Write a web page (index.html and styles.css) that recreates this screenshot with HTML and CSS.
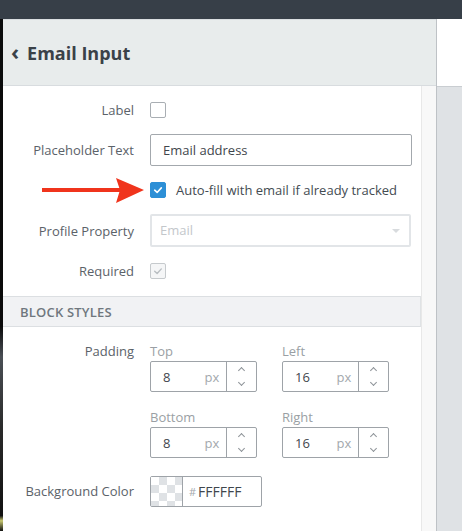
FILE: index.html
```html
<!DOCTYPE html>
<html lang="en">
<head>
    <meta charset="UTF-8">
    <meta name="viewport" content="width=device-width, initial-scale=1.0">
    <title>Email Input</title>
    <link rel="stylesheet" href="styles.css">
</head>
<body>
    <div class="topbar"></div>
    <div class="main">
        <div class="edge"></div>
        <div class="panel">
            <div class="panel-head">
                <span class="back">&#8249;</span>
                <h1>Email Input</h1>
            </div>
            <div class="panel-body">
                <div class="content">
                    <div class="fields">
                        <div class="row">
                            <label class="row-label">Label</label>
                            <span class="check"></span>
                        </div>
                        <div class="row">
                            <label class="row-label">Placeholder Text</label>
                            <div class="text-input">Email address</div>
                        </div>
                        <div class="row">
                            <span class="row-label"></span>
                            <span class="check checked">
                                <svg viewBox="0 0 16 16" width="16" height="16"><path d="M4.2 8.2 L7 10.8 L11.8 5.6" fill="none" stroke="#fff" stroke-width="1.8" stroke-linecap="round" stroke-linejoin="round"/></svg>
                            </span>
                            <span class="check-text">Auto-fill with email if already tracked</span>
                        </div>
                        <div class="row row-gap">
                            <label class="row-label">Profile Property</label>
                            <div class="select disabled">Email<span class="caret"></span></div>
                        </div>
                        <div class="row">
                            <label class="row-label">Required</label>
                            <span class="check disabled">
                                <svg viewBox="0 0 16 16" width="16" height="16"><path d="M4.2 8.2 L7 10.8 L11.8 5.6" fill="none" stroke="#b9bec2" stroke-width="1.6" stroke-linecap="round" stroke-linejoin="round"/></svg>
                            </span>
                        </div>
                    </div>

                    <div class="section-title">BLOCK STYLES</div>

                    <div class="fields block">
                        <div class="row row-top">
                            <label class="row-label">Padding</label>
                            <div class="pad-grid">
                                <div class="pad">
                                    <div class="pad-label">Top</div>
                                    <div class="num">
                                        <span class="num-val">8</span><span class="unit">px</span>
                                        <span class="spin"><i class="up"></i><i class="down"></i></span>
                                    </div>
                                </div>
                                <div class="pad">
                                    <div class="pad-label">Left</div>
                                    <div class="num">
                                        <span class="num-val">16</span><span class="unit">px</span>
                                        <span class="spin"><i class="up"></i><i class="down"></i></span>
                                    </div>
                                </div>
                                <div class="pad">
                                    <div class="pad-label">Bottom</div>
                                    <div class="num">
                                        <span class="num-val">8</span><span class="unit">px</span>
                                        <span class="spin"><i class="up"></i><i class="down"></i></span>
                                    </div>
                                </div>
                                <div class="pad">
                                    <div class="pad-label">Right</div>
                                    <div class="num">
                                        <span class="num-val">16</span><span class="unit">px</span>
                                        <span class="spin"><i class="up"></i><i class="down"></i></span>
                                    </div>
                                </div>
                            </div>
                        </div>
                        <div class="row bg-row">
                            <label class="row-label">Background Color</label>
                            <div class="color">
                                <span class="swatch"></span>
                                <span class="hash">#</span><span class="hex">FFFFFF</span>
                            </div>
                        </div>
                    </div>
                </div>
                <div class="track"></div>
            </div>
        </div>
        <div class="side">
            <div class="side-top"></div>
            <div class="side-rest"></div>
        </div>
    </div>

    <svg class="arrow" width="110" height="30" viewBox="0 0 110 30">
        <rect x="2" y="11" width="80" height="4" fill="#f0341c"/>
        <polygon points="76,1 104,13 76,26 80,13" fill="#f0341c"/>
    </svg>
</body>
</html>
```

FILE: styles.css
```css
body {
    font-family: 'Open Sans', 'Liberation Sans', sans-serif;
    font-size: 13px;
    margin: 0;
    padding: 0;
    width: 462px;
    height: 531px;
    overflow: hidden;
    position: relative;
    background-color: #fff;
    color: #444b52;
}
.topbar {
    height: 19px;
    background-color: #373f48;
}
.main {
    display: flex;
    height: 512px;
}
.edge {
    width: 3px;
    background: linear-gradient(#0b0b0b 0%, #0b0b0b 60%, #4a4f55 66%, #2a2a2a 80%, #111 97%, #c8c870 98%, #111 100%);
}
.panel {
    width: 433px;
    border-right: 1px solid #bec2c6;
    display: flex;
    flex-direction: column;
}
.panel-head {
    height: 65px;
    border-top: 1px solid #dadee1;
    border-bottom: 1px solid #d8dcdf;
    background-color: #e8ecec;
    display: flex;
    align-items: center;
    padding-left: 8px;
}
.back {
    font-size: 22px;
    font-weight: bold;
    color: #3a4148;
    margin-right: 8px;
    line-height: 1;
    margin-top: -3px;
}
h1 {
    margin: 0;
    font-size: 18px;
    font-weight: bold;
    color: #3a4148;
}
.panel-body {
    flex: 1;
    display: flex;
}
.content {
    width: 418px;
}
.track {
    width: 14px;
    border-left: 1px solid #e8e8e8;
    background-color: #f8f8f8;
}
.fields {
    padding: 8px 0 9px;
}
.row {
    display: flex;
    align-items: center;
    min-height: 32px;
    margin-bottom: 8px;
}
.row:last-child {
    margin-bottom: 0;
}
.row-gap {
    margin-top: 1px;
}
.row-label {
    width: 131px;
    margin-right: 16px;
    text-align: right;
    color: #5b6269;
}
.check {
    width: 14px;
    height: 14px;
    border: 1px solid #a9aeb3;
    border-radius: 2px;
    background-color: #fff;
    display: flex;
    align-items: center;
    justify-content: center;
}
.check.checked {
    background-color: #2d8fd6;
    border-color: #2d8fd6;
}
.check.disabled {
    border-color: #c6cacd;
    background-color: #f5f6f7;
}
.check-text {
    margin-left: 10px;
    color: #444b52;
}
.text-input {
    width: 248px;
    height: 30px;
    line-height: 30px;
    border: 1px solid #a3a8ad;
    border-radius: 2px;
    padding-left: 12px;
    color: #3f464d;
}
.select {
    width: 249px;
    height: 29px;
    line-height: 29px;
    border: 2px solid #e2e5e8;
    border-radius: 2px;
    padding-left: 8px;
    color: #c3c7cb;
    position: relative;
}
.caret {
    position: absolute;
    right: 9px;
    top: 13px;
    border-left: 4px solid transparent;
    border-right: 4px solid transparent;
    border-top: 4px solid #d8dbde;
}
.section-title {
    height: 29px;
    line-height: 30px;
    background-color: #f1f2f4;
    border-top: 1px solid #dcdfe2;
    border-bottom: 1px solid #dcdfe2;
    border-right: 1px solid #e0e3e5;
    padding-left: 17px;
    font-size: 13px;
    font-weight: 600;
    color: #6f777e;
    letter-spacing: 0.2px;
}
.block {
    padding-top: 15px;
}
.row-top {
    align-items: flex-start;
}
.row-top .row-label {
    line-height: 18px;
    margin-top: 0;
}
.pad-grid {
    display: grid;
    grid-template-columns: 107px 107px;
    column-gap: 25px;
    row-gap: 16px;
}
.pad-label {
    line-height: 18px;
    margin-bottom: 1px;
    color: #9a9fa4;
}
.num {
    display: flex;
    height: 29px;
    border: 1px solid #9ea3a8;
    border-radius: 2px;
    align-items: center;
}
.num-val {
    width: 42px;
    padding-left: 12px;
    color: #3f464d;
}
.unit {
    width: 22px;
    color: #a3a8ad;
}
.spin {
    height: 29px;
    width: 29px;
    border-left: 1px solid #9ea3a8;
    display: flex;
    flex-direction: column;
    align-items: center;
    justify-content: center;
    gap: 7px;
}
.spin i {
    width: 4px;
    height: 4px;
    border-left: 1.5px solid #8e9398;
    border-top: 1.5px solid #8e9398;
}
.spin .up {
    transform: rotate(45deg);
    margin-top: 3px;
}
.spin .down {
    transform: rotate(225deg);
    margin-bottom: 3px;
}
.bg-row {
    margin-top: 17px;
}
.color {
    display: flex;
    align-items: center;
    width: 110px;
    height: 29px;
    border: 1px solid #9ea3a8;
    border-radius: 2px;
}
.swatch {
    width: 31px;
    height: 29px;
    border-right: 1px solid #9ea3a8;
    background-color: #fff;
    background-image:
        linear-gradient(45deg, #dfe2e5 25%, transparent 25%, transparent 75%, #dfe2e5 75%),
        linear-gradient(45deg, #dfe2e5 25%, transparent 25%, transparent 75%, #dfe2e5 75%);
    background-size: 16px 16px;
    background-position: 0 0, 8px 8px;
}
.hash {
    margin-left: 6px;
    font-size: 11px;
    color: #a3a8ad;
    margin-right: 2px;
}
.hex {
    font-size: 14px;
    color: #3f464d;
}
.side {
    flex: 1;
    display: flex;
    flex-direction: column;
}
.side-top {
    height: 67px;
    background-color: #fff;
}
.side-rest {
    flex: 1;
    border-top: 1px solid #c9cdd1;
    background-color: #dfe2e5;
}
.arrow {
    position: absolute;
    left: 40px;
    top: 177px;
}
```
